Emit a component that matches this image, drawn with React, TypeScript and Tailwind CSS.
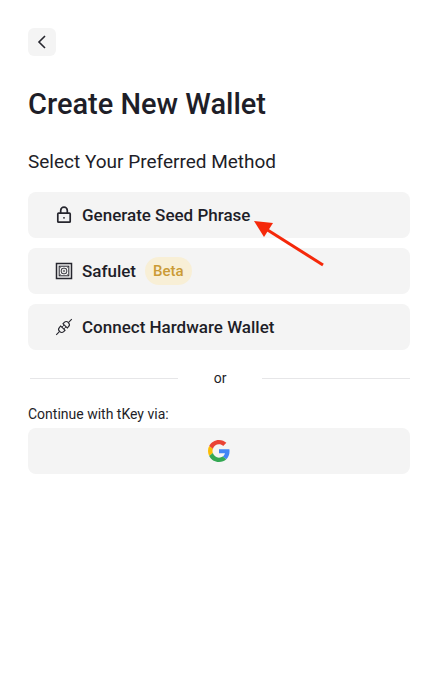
import type { ReactNode } from "react";

const LockIcon = () => (
    <svg width="18" height="18" viewBox="0 0 18 18" fill="none" stroke="#26262e" aria-hidden="true">
        <rect x="2.8" y="7.2" width="12.4" height="9" rx="0.8" strokeWidth="1.7" />
        <path d="M5.7 7.2V4.4a3.3 3.3 0 0 1 6.6 0v2.8" strokeWidth="1.7" />
        <circle cx="9" cy="11.8" r="0.9" fill="#26262e" stroke="none" />
    </svg>
);

const SafeIcon = () => (
    <svg width="18" height="18" viewBox="0 0 18 18" fill="none" stroke="#26262e" aria-hidden="true">
        <rect x="1.5" y="1.5" width="15" height="15" strokeWidth="1.5" />
        <rect x="4.2" y="4.2" width="9.6" height="9.6" strokeWidth="1" />
        <circle cx="9" cy="9" r="2.9" strokeWidth="0.9" />
        <circle cx="9" cy="9" r="0.8" strokeWidth="0.6" />
        <path d="M5 5l1.6 1.6M13 5l-1.6 1.6M5 13l1.6-1.6M13 13l-1.6-1.6" strokeWidth="0.5" />
    </svg>
);

const PlugIcon = () => (
    <svg width="18" height="18" viewBox="0 0 18 18" fill="none" stroke="#26262e" aria-hidden="true">
        <g transform="rotate(-45 9 9)" strokeWidth="1.1">
            <path d="M-2 9h4.8M15.2 9H20" />
            <path d="M7.4 5.4v7.2M7.4 6H5.6a2.8 3 0 0 0 0 6h1.8" />
            <path d="M10.6 5.4v7.2M10.6 6h1.8a2.8 3 0 0 1 0 6h-1.8" />
            <path d="M7.4 7.7h3.2M7.4 10.3h3.2" strokeWidth="0.9" />
        </g>
    </svg>
);

const GoogleIcon = () => (
    <svg width="22" height="22" viewBox="0 0 48 48" aria-hidden="true">
        <path
            fill="#EA4335"
            d="M24 9.5c3.54 0 6.71 1.22 9.21 3.6l6.85-6.85C35.9 2.38 30.47 0 24 0 14.62 0 6.51 5.38 2.56 13.22l7.98 6.19C12.43 13.72 17.74 9.5 24 9.5z"
        />
        <path
            fill="#4285F4"
            d="M46.98 24.55c0-1.57-.15-3.09-.38-4.55H24v9.02h12.94c-.58 2.96-2.26 5.48-4.78 7.18l7.73 6c4.51-4.18 7.09-10.36 7.09-17.65z"
        />
        <path
            fill="#FBBC05"
            d="M10.53 28.59c-.48-1.45-.76-2.99-.76-4.59s.27-3.14.76-4.59l-7.98-6.19C.92 16.46 0 20.12 0 24c0 3.88.92 7.54 2.56 10.78l7.97-6.19z"
        />
        <path
            fill="#34A853"
            d="M24 48c6.48 0 11.93-2.13 15.89-5.81l-7.73-6c-2.15 1.45-4.92 2.3-8.16 2.3-6.26 0-11.57-4.22-13.47-9.91l-7.98 6.19C6.51 42.62 14.62 48 24 48z"
        />
    </svg>
);

const Arrow = () => (
    <svg
        className="absolute left-[226px] top-7 z-10 pointer-events-none"
        width="72"
        height="48"
        viewBox="0 0 72 48"
        aria-hidden="true"
    >
        <path d="M12 9L69 45" stroke="#f5280a" strokeWidth="3" />
        <path d="M0 1L19 3L10 17z" fill="#f5280a" />
    </svg>
);

const MethodButton = ({ icon, children }: { icon: ReactNode; children: ReactNode }) => (
    <button
        type="button"
        className="flex items-center gap-[9px] w-full h-[46px] pl-[27px] pr-4 rounded-lg bg-[#f4f4f4] text-[17px] leading-6 font-medium"
    >
        {icon}
        {children}
    </button>
);

export default function App() {
    return (
        <main className="min-h-screen bg-white p-7 font-['Roboto',sans-serif] text-[#1e1e28]">
            <button
                type="button"
                aria-label="Back"
                className="flex items-center justify-center size-7 rounded-md bg-[#f4f4f4]"
            >
                <svg width="16" height="16" viewBox="0 0 16 16" fill="none" aria-hidden="true">
                    <path d="M11 2L5 8l6 6" stroke="#26262e" strokeWidth="1.6" />
                </svg>
            </button>
            <h1 className="mt-7 text-[29px] leading-10 font-medium">Create New Wallet</h1>
            <h2 className="mt-6 text-[19px] leading-7">Select Your Preferred Method</h2>

            <div className="mt-4 space-y-[10px]">
                <div className="relative">
                    <MethodButton icon={<LockIcon />}>Generate Seed Phrase</MethodButton>
                    <Arrow />
                </div>
                <MethodButton icon={<SafeIcon />}>
                    Safulet
                    <span className="px-2 py-[2px] rounded-full bg-[#f8efd6] text-[15px] text-[#cb9b35]">Beta</span>
                </MethodButton>
                <MethodButton icon={<PlugIcon />}>Connect Hardware Wallet</MethodButton>
            </div>

            <div className="mt-[18px] pl-[2px] flex items-center gap-9 text-sm leading-5">
                <span className="h-px flex-1 bg-[#e6e6e8]" />
                <span>or</span>
                <span className="h-px flex-1 bg-[#e6e6e8]" />
            </div>

            <p className="mt-4 text-sm leading-5">Continue with tKey via:</p>
            <button
                type="button"
                aria-label="Continue with Google"
                className="mt-1 flex items-center justify-center w-full h-[46px] rounded-lg bg-[#f4f4f4]"
            >
                <GoogleIcon />
            </button>
        </main>
    );
}
